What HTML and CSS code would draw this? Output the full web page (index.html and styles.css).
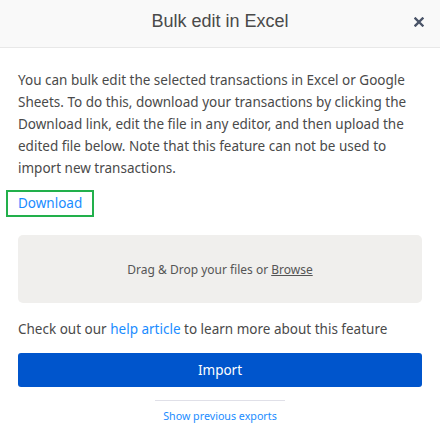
FILE: index.html
```html
<!DOCTYPE html>
<html lang="en">
<head>
  <meta charset="UTF-8" />
  <meta name="viewport" content="width=device-width, initial-scale=1.0"/>
  <title>Bulk edit in Excel</title>
  <link rel="stylesheet" href="styles.css">
</head>
<body>
  <div class="modal">
    <div class="modal-header">
      <h1>Bulk edit in Excel</h1>
      <button class="close" aria-label="Close">
        <svg width="10" height="10" viewBox="0 0 10 10">
          <path d="M1.5 1.5 L8.5 8.5 M8.5 1.5 L1.5 8.5" stroke="#4a5468" stroke-width="2.4" stroke-linecap="square"/>
        </svg>
      </button>
    </div>

    <div class="modal-body">
      <p class="intro">You can bulk edit the selected transactions in Excel or Google Sheets. To do this, download your transactions by clicking the Download link, edit the file in any editor, and then upload the edited file below. Note that this feature can not be used to import new transactions.</p>

      <a class="download" href="#">Download</a>

      <div class="dropzone">
        Drag &amp; Drop your files or <span class="browse">Browse</span>
      </div>

      <p class="help">Check out our <a href="#">help article</a> to learn more about this feature</p>

      <button class="import">Import</button>

      <div class="exports">
        <a href="#">Show previous exports</a>
      </div>
    </div>
  </div>
</body>
</html>
```

FILE: styles.css
```css
body {
  margin: 0;
  background: #fff;
  font-family: "Noto Sans", "Open Sans", sans-serif;
  color: #4a4a4a;
}
.modal {
  width: 440px;
  height: 445px;
}
.modal-header {
  height: 47px;
  background: #f9f9f9;
  border-bottom: 1px solid #e8e8e8;
  display: flex;
  align-items: center;
  justify-content: center;
  position: relative;
}
.modal-header h1 {
  margin: 0;
  font-family: "Liberation Sans", Arial, sans-serif;
  font-weight: normal;
  font-size: 18px;
  color: #4a4a4a;
  padding-bottom: 4px;
}
.close {
  position: absolute;
  right: 16px;
  top: 17px;
  border: none;
  background: none;
  padding: 0;
  width: 10px;
  height: 10px;
  cursor: pointer;
}
.close svg {
  display: block;
}
.modal-body {
  padding: 0 18px;
}
.intro {
  margin: 21px 0 0;
  font-size: 13.5px;
  line-height: 22px;
}
.download {
  display: inline-block;
  margin: 11px 0 0 -12px;
  padding: 0 10px;
  height: 23px;
  line-height: 23px;
  border: 2px solid #22b04b;
  color: #1a8cff;
  text-decoration: none;
  font-size: 13.5px;
}
.dropzone {
  margin-top: 18px;
  height: 68px;
  background: #f0efed;
  border-radius: 5px;
  display: flex;
  align-items: center;
  justify-content: center;
  font-size: 12px;
  color: #555;
}
.browse {
  text-decoration: underline;
  margin-left: 3px;
}
.help {
  margin: 17px 0 0;
  font-size: 13.5px;
  line-height: 18px;
}
.help a {
  color: #1a8cff;
  text-decoration: none;
}
.import {
  display: block;
  width: 100%;
  margin-top: 15px;
  height: 34px;
  border: none;
  border-radius: 3px;
  background: #0055cc;
  color: #fff;
  font-family: inherit;
  font-size: 13.5px;
  cursor: pointer;
}
.exports {
  width: 130px;
  margin: 13px auto 0;
  border-top: 1px solid #e0e0e8;
  text-align: center;
  padding-top: 2px;
}
.exports a {
  font-size: 10.7px;
  color: #1a8cff;
  text-decoration: none;
}
```
